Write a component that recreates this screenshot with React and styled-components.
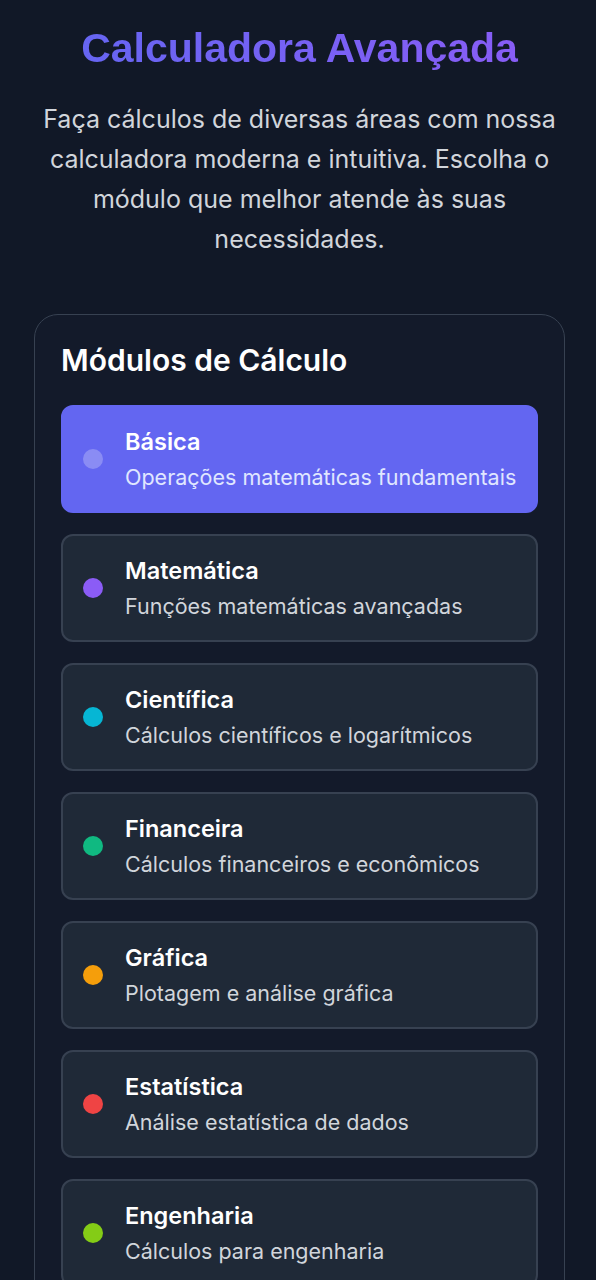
import styled, { createGlobalStyle } from "styled-components";

const modules = [
  { name: "Básica", desc: "Operações matemáticas fundamentais", color: "#6366f1" },
  { name: "Matemática", desc: "Funções matemáticas avançadas", color: "#8b5cf6" },
  { name: "Científica", desc: "Cálculos científicos e logarítmicos", color: "#06b6d4" },
  { name: "Financeira", desc: "Cálculos financeiros e econômicos", color: "#10b981" },
  { name: "Gráfica", desc: "Plotagem e análise gráfica", color: "#f59e0b" },
  { name: "Estatística", desc: "Análise estatística de dados", color: "#ef4444" },
  { name: "Engenharia", desc: "Cálculos para engenharia", color: "#84cc16" },
];

export default function App() {
  const active = 0;

  return (
    <>
      <GlobalStyle />
      <Page>
        <Header>
          <Title>Calculadora Avançada</Title>
          <Subtitle>
            Faça cálculos de diversas áreas com nossa calculadora moderna e
            intuitiva. Escolha o módulo que melhor atende às suas necessidades.
          </Subtitle>
        </Header>
        <Card>
          <CardTitle>Módulos de Cálculo</CardTitle>
          <ModuleList>
            {modules.map((m, i) => (
              <ModuleItem key={m.name} $active={i === active}>
                <Dot $color={i === active ? "rgba(255,255,255,0.25)" : m.color} />
                <ModuleText>
                  <ModuleName>{m.name}</ModuleName>
                  <ModuleDesc $active={i === active}>{m.desc}</ModuleDesc>
                </ModuleText>
              </ModuleItem>
            ))}
          </ModuleList>
        </Card>
      </Page>
    </>
  );
}

const GlobalStyle = createGlobalStyle`
  html, body {
    margin: 0;
    background: #111827;
  }
  body {
    font-family: Inter, "Noto Sans", sans-serif;
    color: #f9fafb;
  }
`;

const Page = styled.div`
  min-height: 1280px;
  padding: 24px 31px 0 34px;
  box-sizing: border-box;
`;

const Header = styled.header`
  text-align: center;
  margin-bottom: 55px;
`;

const Title = styled.h1`
  margin: 0 0 27px;
  font-family: "Liberation Sans", Arial, sans-serif;
  font-size: 41px;
  line-height: 48px;
  font-weight: 700;
  background: linear-gradient(90deg, #6366f1, #8b5cf6);
  -webkit-background-clip: text;
  background-clip: text;
  color: transparent;
`;

const Subtitle = styled.p`
  margin: 0;
  font-size: 25px;
  line-height: 40px;
  color: #d1d5db;
`;

const Card = styled.section`
  background: #131a2a;
  border: 1px solid #374151;
  border-radius: 24px;
  padding: 27px 26px 40px;
`;

const CardTitle = styled.h2`
  margin: 0 0 27px;
  font-size: 30px;
  line-height: 36px;
  font-weight: 600;
  color: #ffffff;
`;

const ModuleList = styled.div`
  display: flex;
  flex-direction: column;
  gap: 21px;
`;

const ModuleItem = styled.div`
  display: flex;
  align-items: center;
  gap: 22px;
  padding: 20px 8px 20px 20px;
  border-radius: 12px;
  border: 2px solid ${(p) => (p.$active ? "#6366f1" : "#374151")};
  background: ${(p) => (p.$active ? "#6366f1" : "#1f2937")};
`;

const Dot = styled.span`
  width: 20px;
  height: 20px;
  border-radius: 50%;
  flex-shrink: 0;
  background: ${(p) => p.$color};
`;

const ModuleText = styled.div`
  display: flex;
  flex-direction: column;
  gap: 6px;
  min-width: 0;
`;

const ModuleName = styled.div`
  font-size: 23.5px;
  line-height: 30px;
  font-weight: 600;
  color: #ffffff;
`;

const ModuleDesc = styled.div`
  font-size: 21.5px;
  line-height: 28px;
  white-space: nowrap;
  color: ${(p) => (p.$active ? "#e0e7ff" : "#d1d5db")};
`;
